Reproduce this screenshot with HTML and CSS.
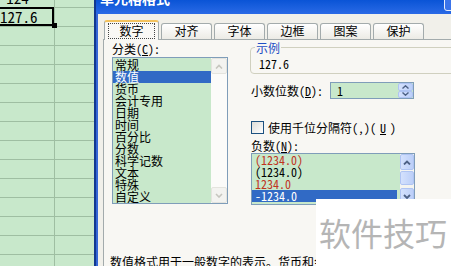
FILE: index.html
```html
<!DOCTYPE html>
<html lang="zh-CN">

<head>
  <meta charset="UTF-8" />
  <title>单元格格式</title>
  <link rel="stylesheet" href="styles.css">
</head>

<body>
  <!-- worksheet behind the dialog -->
  <div class="sheet">
    <div class="row"><div class="cell a">124</div><div class="cell"></div></div>
    <div class="row"><div class="cell a sel">127.6</div><div class="cell"></div></div>
    <div class="row"><div class="cell a"></div><div class="cell"></div></div>
    <div class="row"><div class="cell a"></div><div class="cell"></div></div>
    <div class="row"><div class="cell a"></div><div class="cell"></div></div>
    <div class="row"><div class="cell a"></div><div class="cell"></div></div>
    <div class="row"><div class="cell a"></div><div class="cell"></div></div>
    <div class="row"><div class="cell a"></div><div class="cell"></div></div>
    <div class="row"><div class="cell a"></div><div class="cell"></div></div>
    <div class="row"><div class="cell a"></div><div class="cell"></div></div>
    <div class="row"><div class="cell a"></div><div class="cell"></div></div>
    <div class="row"><div class="cell a"></div><div class="cell"></div></div>
    <div class="row"><div class="cell a"></div><div class="cell"></div></div>
    <div class="row"><div class="cell a"></div><div class="cell"></div></div>
    <div class="row"><div class="cell a"></div><div class="cell"></div></div>
  </div>

  <div class="dialog">
    <div class="titlebar">
      <span class="title">单元格格式</span>
      <span class="help"></span>
    </div>

    <div class="dlg-body">
      <div class="tabs">
        <div class="tab active"><span class="focus">数字</span></div>
        <div class="tab">对齐</div>
        <div class="tab">字体</div>
        <div class="tab">边框</div>
        <div class="tab">图案</div>
        <div class="tab">保护</div>
      </div>

      <div class="panel">
        <div class="cols">
          <!-- category list -->
          <div class="left">
            <div class="label">分类(<u>C</u>):</div>
            <div class="listbox cats">
              <ul class="items">
                <li>常规</li>
                <li class="on">数值</li>
                <li>货币</li>
                <li>会计专用</li>
                <li>日期</li>
                <li>时间</li>
                <li>百分比</li>
                <li>分数</li>
                <li>科学记数</li>
                <li>文本</li>
                <li>特殊</li>
                <li>自定义</li>
              </ul>
              <div class="sb off">
                <div class="sb-btn"><svg width="8" height="5" viewBox="0 0 8 5"><path d="M1 4.5 L4 1.5 L7 4.5" fill="none" stroke="currentColor" stroke-width="1.6"/></svg></div>
                <div class="track"></div>
                <div class="sb-btn"><svg width="8" height="5" viewBox="0 0 8 5"><path d="M1 1 L4 4 L7 1" fill="none" stroke="currentColor" stroke-width="1.6"/></svg></div>
              </div>
            </div>
          </div>

          <!-- options for the number format -->
          <div class="right">
            <div class="sample">
              <div class="sample-title">示例</div>
              <div class="sample-value">127.6</div>
            </div>

            <div class="field">
              <span class="field-label">小数位数(<u>D</u>):</span>
              <div class="spin">
                <span class="spin-value">1</span>
                <div class="spin-btns">
                  <div class="spin-btn"><svg width="7" height="4" viewBox="0 0 7 4"><path d="M0.5 3.5 L3.5 0.8 L6.5 3.5" fill="none" stroke="currentColor" stroke-width="1.4"/></svg></div>
                  <div class="spin-btn"><svg width="7" height="4" viewBox="0 0 7 4"><path d="M0.5 0.5 L3.5 3.2 L6.5 0.5" fill="none" stroke="currentColor" stroke-width="1.4"/></svg></div>
                </div>
              </div>
            </div>

            <label class="check"><span class="box"></span>使用千位分隔符(,)(<u>U</u>)</label>

            <div class="label neg-label">负数(<u>N</u>):</div>
            <div class="listbox neg">
              <ul class="items">
                <li class="red">(1234.0)</li>
                <li>(1234.0)</li>
                <li class="red">1234.0</li>
                <li class="on">-1234.0</li>
              </ul>
              <div class="sb blue">
                <div class="sb-btn"><svg width="8" height="5" viewBox="0 0 8 5"><path d="M1 4.5 L4 1.5 L7 4.5" fill="none" stroke="currentColor" stroke-width="1.8"/></svg></div>
                <div class="thumb"></div>
                <div class="track"></div>
                <div class="sb-btn"><svg width="8" height="5" viewBox="0 0 8 5"><path d="M1 1 L4 4 L7 1" fill="none" stroke="currentColor" stroke-width="1.8"/></svg></div>
              </div>
            </div>
          </div>
        </div>

        <p class="desc">数值格式用于一般数字的表示。货币和会计格式则提供货币值计算的专用格式。</p>
      </div>
    </div>
  </div>

  <div class="watermark">软件技巧</div>
</body>

</html>
```

FILE: styles.css
```css
* {
  box-sizing: border-box;
}

body {
  margin: 0;
  width: 451px;
  height: 266px;
  overflow: hidden;
  position: relative;
  display: flex;
  background: #c8e8cb;
  font-family: "Noto Sans CJK SC", "Noto Sans", sans-serif;
  font-size: 12px;
  font-feature-settings: "hwid" 1;
  color: #000;
}

/* worksheet */
.sheet {
  width: 94px;
  flex: none;
  margin-top: -11px;
}

.row {
  display: flex;
  height: 19px;
  border-bottom: 1px solid #9fbea2;
}

.cell {
  height: 18px;
  line-height: 18px;
}

.cell.a {
  width: 55px;
  padding-right: 19px;
  border-right: 1px solid #9fbea2;
  text-align: center;
  font-size: 15px;
  white-space: nowrap;
}

.cell.sel {
  position: relative;
}

.cell.sel::after {
  content: "";
  position: absolute;
  top: -1px;
  bottom: 0;
  right: 0;
  left: -3px;
  border: 2px solid #000;
}

.cell.sel::before {
  content: "";
  position: absolute;
  right: -3px;
  bottom: -2px;
  width: 5px;
  height: 5px;
  background: #000;
  z-index: 1;
}

/* dialog frame */
.dialog {
  width: 390px;
  flex: none;
  display: flex;
  flex-direction: column;
  background: #f1f0ea;
  border-left: 2px solid #12388f;
}

.titlebar {
  height: 14px;
  flex: none;
  display: flex;
  align-items: flex-start;
  padding-left: 4px;
  background: linear-gradient(#0a54d6, #2a6ae6);
  color: #fff;
}

.title {
  font-size: 14px;
  font-weight: bold;
  line-height: 14px;
  margin-top: -9px;
}

.help {
  margin-left: auto;
  margin-right: 19px;
  margin-top: -10px;
  width: 21px;
  height: 21px;
  border: 1px solid #e8eefc;
  border-radius: 3px;
  background: #3b74ea;
}

.dlg-body {
  flex: 1;
  border-left: 2px solid #3466d6;
  padding: 6px 0 0 5px;
  display: flex;
  flex-direction: column;
}

/* tabs */
.tabs {
  display: flex;
  align-items: flex-end;
  gap: 2px;
  height: 19px;
  padding-left: 1px;
}

.tab {
  width: 51px;
  height: 16px;
  border: 1px solid #a3abac;
  border-bottom: none;
  border-radius: 3px 3px 0 0;
  background: linear-gradient(#ffffff, #ecebe5);
  text-align: center;
  line-height: 13px;
}

.tab.active {
  width: 55px;
  height: 20px;
  margin-bottom: -1px;
  position: relative;
  border-top: 2px solid #f3c25e;
  background: #f9f8f5;
  line-height: normal;
}

.focus {
  display: inline-block;
  padding: 0 10px;
  line-height: 14px;
  border: 1px dotted #444;
}

.panel {
  flex: 1;
  border: 1px solid #a3abac;
  border-right: none;
  background: #f8f7f3;
  padding: 2px 0 0 8px;
}

.cols {
  display: flex;
  gap: 22px;
}

.left {
  width: 116px;
  flex: none;
}

.right {
  flex: 1;
}

.label {
  line-height: 14px;
  white-space: nowrap;
}

/* list boxes */
.listbox {
  display: flex;
  border: 1px solid #7f9db9;
  background: #c8e8cb;
}

.cats {
  height: 147px;
  margin-top: 1px;
}

.items {
  list-style: none;
  margin: 0;
  padding: 1px 0 0;
  flex: 1;
}

.items li {
  height: 12px;
  line-height: 12px;
  padding-left: 2px;
  white-space: nowrap;
}

.items li.on {
  background: #316ac5;
  color: #fff;
}

.items li.red {
  color: #c0341f;
}

.sb {
  width: 16px;
  flex: none;
  display: flex;
  flex-direction: column;
  background: #fbfbf9;
}

.sb-btn {
  height: 16px;
  flex: none;
  display: flex;
  align-items: center;
  justify-content: center;
}

.sb .track {
  flex: 1;
}

.sb.off .sb-btn {
  background: #f3f3f0;
  border: 1px solid #e4e4de;
  border-radius: 2px;
  color: #c6c6bf;
}

.sb.blue {
  width: 14px;
  background: #f4f4f0;
}

.sb.blue .sb-btn,
.sb.blue .thumb {
  background: linear-gradient(90deg, #d4e1fd, #bccff8);
  border: 1px solid #afc4f3;
  border-radius: 2px;
  color: #4d6185;
}

.sb.blue .thumb {
  height: 14px;
  margin: 1px 0;
}

/* right column */
.sample {
  margin-top: 5px;
  height: 27px;
  border: 1px solid #d0d0bf;
  border-radius: 4px;
}

.sample-title {
  width: max-content;
  margin: -7px 0 0 4px;
  padding: 0 1px;
  line-height: 13px;
  background: #f8f7f3;
  color: #1f4fc4;
}

.sample-value {
  margin-top: 4px;
  padding-left: 8px;
  line-height: 12px;
}

.field {
  display: flex;
  align-items: center;
  margin-top: 8px;
}

.field-label {
  width: 80px;
  padding-left: 1px;
  white-space: nowrap;
}

.spin {
  width: 84px;
  height: 17px;
  display: flex;
  border: 1px solid #7f9db9;
  background: #c8e8cb;
}

.spin-value {
  flex: 1;
  padding-left: 6px;
  line-height: 15px;
}

.spin-btns {
  width: 15px;
  display: flex;
  flex-direction: column;
}

.spin-btn {
  flex: 1;
  display: flex;
  align-items: center;
  justify-content: center;
  background: linear-gradient(90deg, #d4e1fd, #bccff8);
  border: 1px solid #afc4f3;
  border-radius: 2px;
  color: #4d6185;
}

.check {
  display: flex;
  align-items: center;
  gap: 4px;
  margin-top: 22px;
  padding-left: 1px;
  line-height: 13px;
  white-space: nowrap;
}

.box {
  width: 13px;
  height: 13px;
  flex: none;
  border: 1px solid #1c5180;
  background: linear-gradient(135deg, #dcdcd7, #ffffff);
}

.neg-label {
  margin-top: 5px;
  padding-left: 1px;
}

.neg {
  width: 164px;
  height: 52px;
  margin-left: 1px;
}

.neg .items {
  padding-top: 0;
}

.neg .items li {
  padding-left: 3px;
  margin-right: 3px;
}

.desc {
  margin: 51px 0 0 -2px;
  line-height: 12px;
  white-space: nowrap;
}

/* site watermark in the corner */
.watermark {
  position: absolute;
  left: 316px;
  top: 199px;
  width: 135px;
  height: 67px;
  padding: 17px 0 0 3px;
  background: #fff;
  color: #b5b5b5;
  font-size: 32px;
  line-height: 32px;
  font-feature-settings: normal;
  white-space: nowrap;
}
```
